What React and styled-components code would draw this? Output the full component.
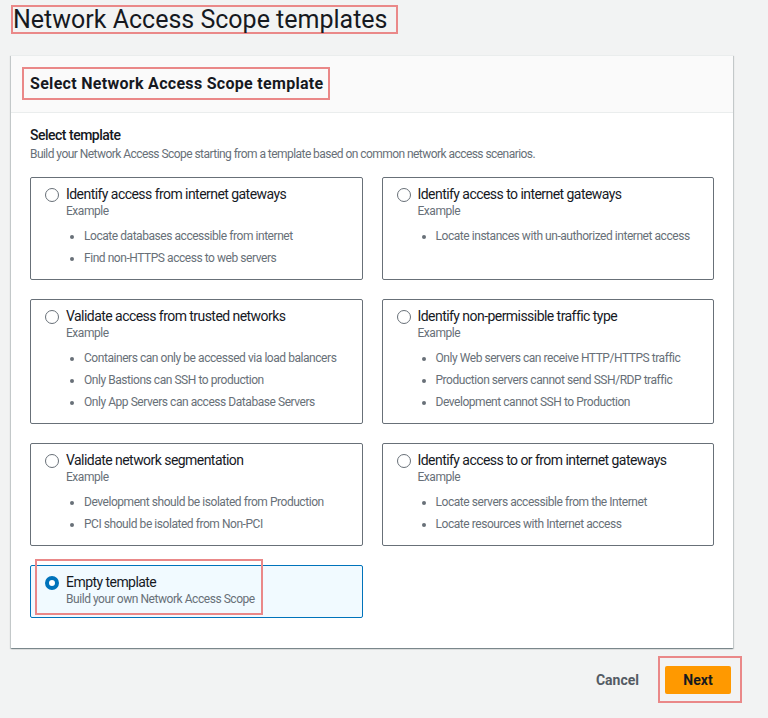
import React from 'react'
import styled, { createGlobalStyle } from 'styled-components'

const GlobalStyle = createGlobalStyle`
    body {
        margin: 0;
        background: #f2f3f3;
        font-family: Roboto, "Liberation Sans", sans-serif;
        color: #16191f;
    }
`;

const Page = styled.div`
    width: 768px;
    min-height: 718px;
    padding-top: 5px;
    box-sizing: border-box;
`;

const Mark = styled.div`
    display: inline-block;
    border: 2px solid #ea8888;
`;

const TitleMark = styled(Mark)`
    margin-left: 11px;
`;

const Title = styled.h1`
    margin: 0;
    padding: 0 8px 0 0;
    font-size: 25px;
    font-weight: 400;
    line-height: 25px;
`;

const Panel = styled.div`
    margin: 21px 0 0 11px;
    width: 722px;
    background: #fff;
    border-top: 1px solid #eaeded;
    box-shadow: 0 1px 1px 0 rgba(0, 28, 36, 0.3), 1px 1px 1px 0 rgba(0, 28, 36, 0.15), -1px 1px 1px 0 rgba(0, 28, 36, 0.15);
`;

const PanelHeader = styled.div`
    background: #fafafa;
    border-bottom: 1px solid #eaeded;
    padding: 11px 11px 12px;
`;

const HeaderMark = styled(Mark)`
    padding: 0 5px 0 6px;
`;

const PanelTitle = styled.h2`
    margin: 0;
    font-size: 16px;
    font-weight: 700;
    line-height: 29px;
    letter-spacing: 0.3px;
`;

const PanelBody = styled.div`
    padding: 11px 19px 30px 19px;
`;

const Label = styled.div`
    font-size: 14px;
    font-weight: 500;
    line-height: 22px;
    letter-spacing: -0.5px;
`;

const Hint = styled.div`
    font-size: 12px;
    line-height: 16px;
    color: #687078;
    margin-bottom: 15px;
    letter-spacing: -0.55px;
`;

const Grid = styled.div`
    display: grid;
    grid-template-columns: 1fr 1fr;
    column-gap: 19px;
    row-gap: 19px;
`;

const Tile = styled.label`
    position: relative;
    display: flex;
    gap: 7px;
    padding: 7px 16px 10px 14px;
    border: 1px solid ${p => (p.$selected ? '#0073bb' : '#687078')};
    background: ${p => (p.$selected ? '#f1faff' : '#fff')};
    border-radius: 2px;
`;

const Radio = styled.span`
    flex: none;
    width: 14px;
    height: 14px;
    margin-top: 3px;
    box-sizing: border-box;
    border-radius: 50%;
    border: ${p => (p.$checked ? '4px solid #0073bb' : '1px solid #687078')};
    background: #fff;
`;

const TileText = styled.div`
    display: flex;
    flex-direction: column;
`;

const TileTitle = styled.div`
    font-size: 14px;
    line-height: 18px;
    letter-spacing: -0.55px;
`;

const TileSub = styled.div`
    font-size: 12px;
    line-height: 16px;
    color: #687078;
    letter-spacing: -0.45px;
`;

const Bullets = styled.ul`
    margin: 6px 0 0;
    padding-left: 18px;
    font-size: 12px;
    line-height: 22px;
    color: #687078;
    letter-spacing: -0.45px;
`;

const TileMark = styled.div`
    position: absolute;
    left: 4px;
    top: -7px;
    width: 228px;
    height: 56px;
    box-sizing: border-box;
    border: 2px solid #ea8888;
    pointer-events: none;
`;

const Footer = styled.div`
    display: flex;
    justify-content: flex-end;
    align-items: center;
    gap: 19px;
    margin-top: 8px;
    padding-right: 26px;
`;

const CancelButton = styled.button`
    border: none;
    background: none;
    padding: 0;
    font-family: inherit;
    font-size: 14px;
    font-weight: 700;
    color: #545b64;
`;

const NextMark = styled(Mark)`
    padding: 8px 9px 7px 5px;
`;

const NextButton = styled.button`
    display: block;
    width: 66px;
    height: 28px;
    border: none;
    border-radius: 2px;
    background: #ff9900;
    font-family: inherit;
    font-size: 14px;
    font-weight: 700;
    color: #16191f;
`;

const templates = [
    { title: 'Identify access from internet gateways', items: ['Locate databases accessible from internet', 'Find non-HTTPS access to web servers'] },
    { title: 'Identify access to internet gateways', items: ['Locate instances with un-authorized internet access'] },
    { title: 'Validate access from trusted networks', items: ['Containers can only be accessed via load balancers', 'Only Bastions can SSH to production', 'Only App Servers can access Database Servers'] },
    { title: 'Identify non-permissible traffic type', items: ['Only Web servers can receive HTTP/HTTPS traffic', 'Production servers cannot send SSH/RDP traffic', 'Development cannot SSH to Production'] },
    { title: 'Validate network segmentation', items: ['Development should be isolated from Production', 'PCI should be isolated from Non-PCI'] },
    { title: 'Identify access to or from internet gateways', items: ['Locate servers accessible from the Internet', 'Locate resources with Internet access'] },
];

export default function App() {
    return (
        <Page>
            <GlobalStyle />
            <TitleMark>
                <Title>Network Access Scope templates</Title>
            </TitleMark>
            <Panel>
                <PanelHeader>
                    <HeaderMark>
                        <PanelTitle>Select Network Access Scope template</PanelTitle>
                    </HeaderMark>
                </PanelHeader>
                <PanelBody>
                    <Label>Select template</Label>
                    <Hint>Build your Network Access Scope starting from a template based on common network access scenarios.</Hint>
                    <Grid>
                        {templates.map(t => (
                            <Tile key={t.title}>
                                <Radio />
                                <TileText>
                                    <TileTitle>{t.title}</TileTitle>
                                    <TileSub>Example</TileSub>
                                    <Bullets>
                                        {t.items.map(i => <li key={i}>{i}</li>)}
                                    </Bullets>
                                </TileText>
                            </Tile>
                        ))}
                        <Tile $selected>
                            <Radio $checked />
                            <TileText>
                                <TileTitle>Empty template</TileTitle>
                                <TileSub>Build your own Network Access Scope</TileSub>
                            </TileText>
                            <TileMark />
                        </Tile>
                    </Grid>
                </PanelBody>
            </Panel>
            <Footer>
                <CancelButton>Cancel</CancelButton>
                <NextMark>
                    <NextButton>Next</NextButton>
                </NextMark>
            </Footer>
        </Page>
    )
}
